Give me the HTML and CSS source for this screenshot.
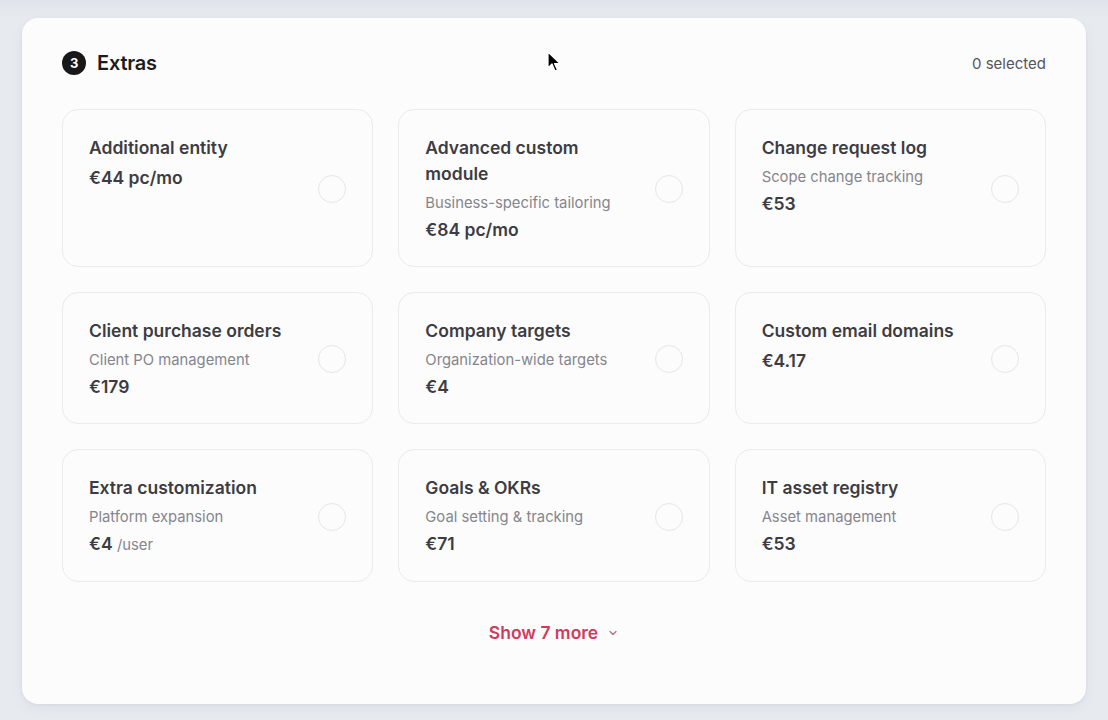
FILE: index.html
```html
<!DOCTYPE html>
<html lang="en">
<head>
  <meta charset="UTF-8" />
  <meta name="viewport" content="width=device-width, initial-scale=1" />
  <title>Extras</title>
  <link rel="stylesheet" href="styles.css">
</head>
<body>
  <section class="panel">
    <header class="panel-head">
      <h2><span class="step">3</span>Extras</h2>
      <span class="count">0 selected</span>
    </header>

    <div class="options">
      <label class="option">
        <div class="info">
          <div class="name">Additional entity</div>
          <div class="price">€44 pc/mo</div>
        </div>
        <span class="radio"></span>
      </label>
      <label class="option">
        <div class="info">
          <div class="name">Advanced custom<br>module</div>
          <div class="desc">Business-specific tailoring</div>
          <div class="price">€84 pc/mo</div>
        </div>
        <span class="radio"></span>
      </label>
      <label class="option">
        <div class="info">
          <div class="name">Change request log</div>
          <div class="desc">Scope change tracking</div>
          <div class="price">€53</div>
        </div>
        <span class="radio"></span>
      </label>
      <label class="option">
        <div class="info">
          <div class="name">Client purchase orders</div>
          <div class="desc">Client PO management</div>
          <div class="price">€179</div>
        </div>
        <span class="radio"></span>
      </label>
      <label class="option">
        <div class="info">
          <div class="name">Company targets</div>
          <div class="desc">Organization-wide targets</div>
          <div class="price">€4</div>
        </div>
        <span class="radio"></span>
      </label>
      <label class="option">
        <div class="info">
          <div class="name">Custom email domains</div>
          <div class="price">€4.17</div>
        </div>
        <span class="radio"></span>
      </label>
      <label class="option">
        <div class="info">
          <div class="name">Extra customization</div>
          <div class="desc">Platform expansion</div>
          <div class="price">€4 <span class="unit">/user</span></div>
        </div>
        <span class="radio"></span>
      </label>
      <label class="option">
        <div class="info">
          <div class="name">Goals &amp; OKRs</div>
          <div class="desc">Goal setting &amp; tracking</div>
          <div class="price">€71</div>
        </div>
        <span class="radio"></span>
      </label>
      <label class="option">
        <div class="info">
          <div class="name">IT asset registry</div>
          <div class="desc">Asset management</div>
          <div class="price">€53</div>
        </div>
        <span class="radio"></span>
      </label>
    </div>

    <button class="more">Show 7 more
      <svg width="12" height="12" viewBox="0 0 12 12" fill="none" stroke="currentColor" stroke-width="1.3" stroke-linecap="round" stroke-linejoin="round"><path d="M3 4.5 6 7.5 9 4.5"/></svg>
    </button>

    <!-- pointer -->
    <svg class="cursor" width="14" height="22" viewBox="0 0 14 22">
      <path d="M1 1 L1 17 L5 13 L8 20 L10.5 19 L7.5 12.5 L13 12.5 Z" fill="#000" stroke="#fff" stroke-width="1.2" stroke-linejoin="round"/>
    </svg>
  </section>
</body>
</html>
```

FILE: styles.css
```css
:root {
  --bg: #e7eaef;
  --panel: #fcfcfd;
  --border: #ebebed;
  --text: #1c1c1f;
  --title: #3c3c42;
  --muted: #85858c;
  --accent: #d03b5c;
}

* {
  margin: 0;
  padding: 0;
  box-sizing: border-box;
}

body {
  font-family: Inter, 'Noto Sans', sans-serif;
  background: linear-gradient(to bottom, #dfe3e9 0, #e4e7ec 10px, var(--bg) 18px);
  color: var(--text);
  height: 720px;
  overflow: hidden;
  padding: 18px 22px 0;
}

.panel {
  position: relative;
  background: var(--panel);
  border-radius: 16px;
  height: 686px;
  padding: 33px 40px 0;
  box-shadow: 0 1px 3px rgba(30, 40, 60, 0.06), 0 4px 14px rgba(30, 40, 60, 0.05);
}

.panel-head {
  display: flex;
  align-items: center;
  justify-content: space-between;
  height: 24px;
}

.panel-head h2 {
  display: flex;
  align-items: center;
  gap: 11px;
  font-size: 20px;
  font-weight: 600;
  letter-spacing: -0.2px;
}

.step {
  display: inline-flex;
  align-items: center;
  justify-content: center;
  width: 24px;
  height: 24px;
  border-radius: 50%;
  background: #18181b;
  color: #fff;
  font-size: 13px;
  font-weight: 700;
}

.count {
  font-size: 15px;
  color: #55555c;
}

.options {
  display: grid;
  grid-template-columns: repeat(3, 1fr);
  gap: 25px;
  margin-top: 34px;
}

.option {
  display: flex;
  align-items: flex-start;
  justify-content: space-between;
  padding: 25px 26px 23px;
  border: 1px solid var(--border);
  border-radius: 16px;
  background: var(--panel);
  cursor: pointer;
}

.name {
  font-size: 17.5px;
  font-weight: 600;
  line-height: 26px;
  color: var(--title);
  margin-bottom: 4px;
}

.desc {
  font-size: 14.8px;
  line-height: 24px;
  color: var(--muted);
  margin-bottom: 2px;
}

.price {
  font-size: 17.5px;
  font-weight: 600;
  line-height: 26px;
  color: var(--title);
}

.unit {
  font-size: 14.8px;
  font-weight: 400;
  color: var(--muted);
}

.radio {
  flex: none;
  align-self: center;
  width: 28px;
  height: 28px;
  border-radius: 50%;
  border: 1px solid #e6e6e9;
}

.more {
  display: flex;
  align-items: center;
  gap: 9px;
  margin: 40px auto 0;
  background: none;
  border: none;
  font-family: inherit;
  font-size: 17.5px;
  font-weight: 600;
  color: var(--accent);
  cursor: pointer;
}

.more svg {
  color: #c06a7c;
}

.cursor {
  position: absolute;
  left: 525px;
  top: 33px;
}
```
